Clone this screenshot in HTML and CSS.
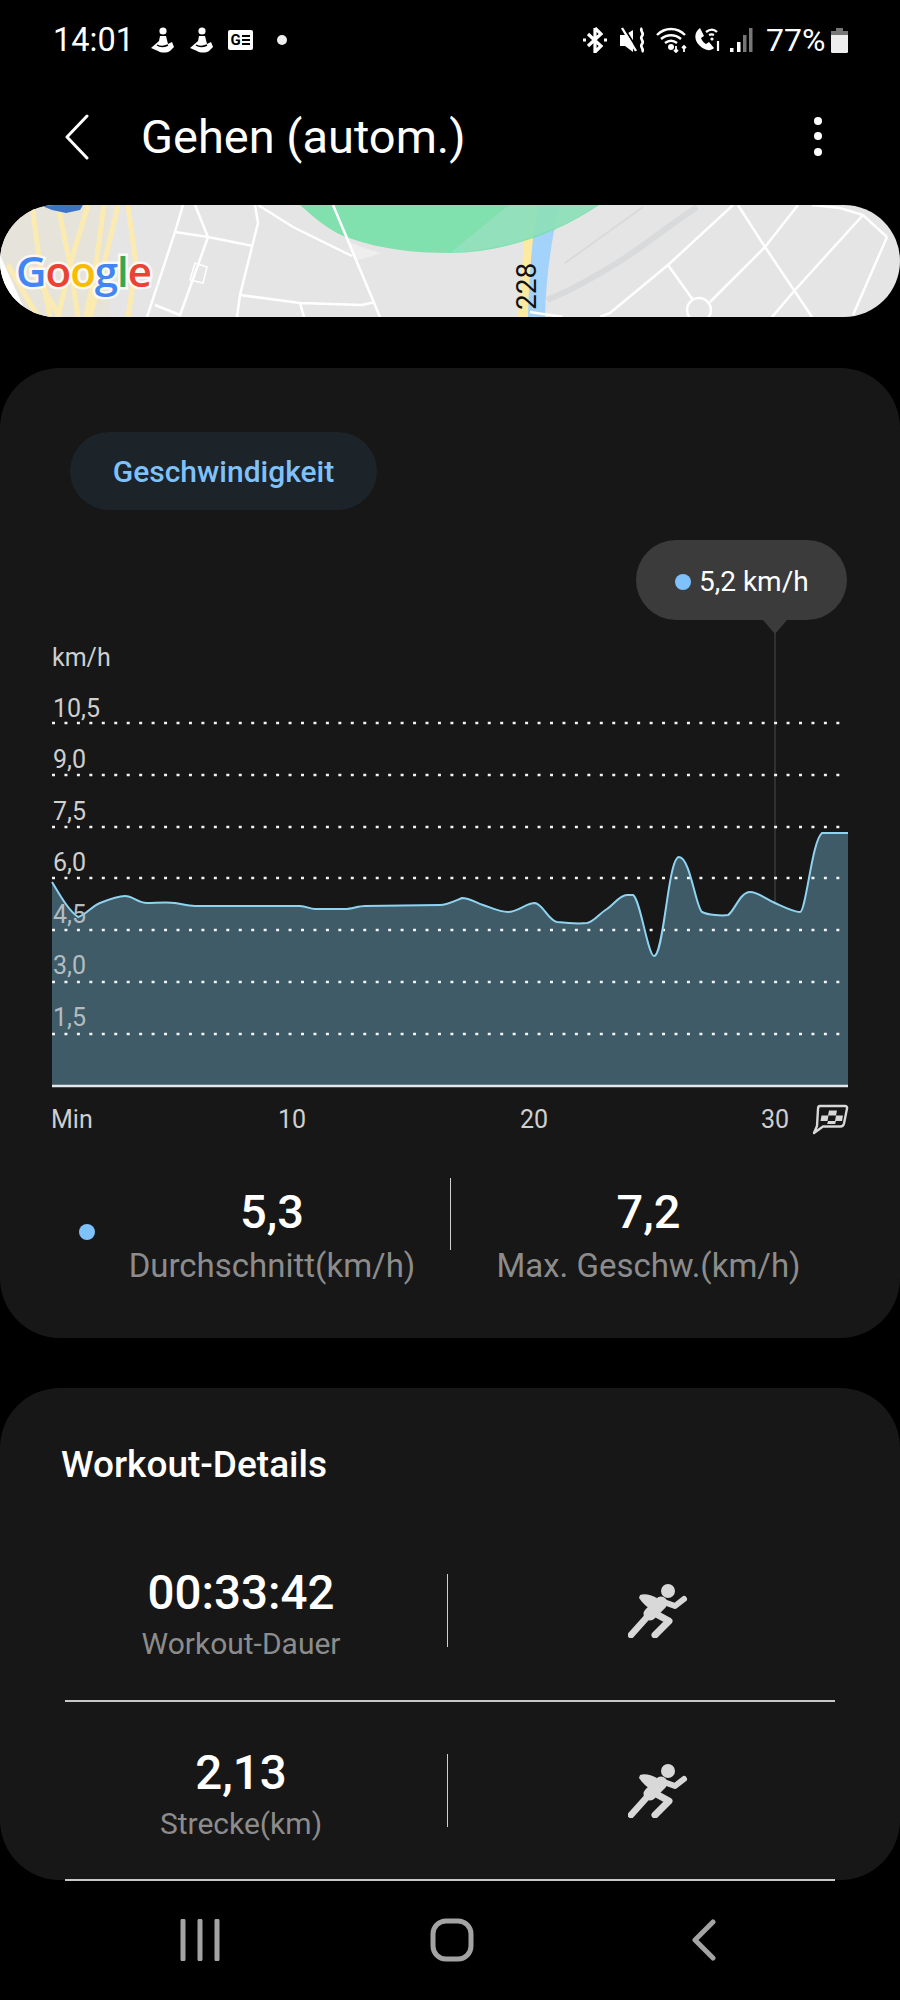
FILE: index.html
```html
<!DOCTYPE html>
<html lang="de">
<head>
  <meta charset="UTF-8" />
  <title>Gehen (autom.)</title>
  <link rel="stylesheet" href="styles.css">
</head>
<body>

  <div class="status">
    <span class="clock">14:01</span>
    <svg class="ic-person" viewBox="0 0 24 26"><circle cx="13" cy="4" r="3.6"/><path d="M10 9h6l2 8 4-2 2 5-4 4c-3 2-9 2-12 0l-7-3 8-7z"/><path d="M7 18c3 2 7 2 11 0" fill="none" stroke="#000" stroke-width="1.500"/></svg>
    <svg class="ic-person" viewBox="0 0 24 26"><circle cx="13" cy="4" r="3.6"/><path d="M10 9h6l2 8 4-2 2 5-4 4c-3 2-9 2-12 0l-7-3 8-7z"/><path d="M7 18c3 2 7 2 11 0" fill="none" stroke="#000" stroke-width="1.500"/></svg>
    <svg class="ic-news" viewBox="0 0 25 20"><rect width="25" height="20" rx="2" fill="#fff"/><text x="2.5" y="15" class="ic-news-g">G</text><path d="M14 6h8M14 10h8M14 14h8" stroke="#000" stroke-width="2"/></svg>
    <span class="status-dot"></span>
    <span class="status-gap"></span>
    <svg class="ic-bt" viewBox="0 0 24 26" fill="none" stroke="#fff" stroke-width="3.200"><path d="M12 1v24l6-6L5 7M12 1l6 6L5 19"/><path d="M0 13h3M21 13h3"/></svg>
    <svg class="ic-mute" viewBox="0 0 28 26"><path d="M1 8h5l8-5v22l-8-6H1z" fill="#fff"/><path d="M5 1l14 22" stroke="#000" stroke-width="2"/><path d="M3 1l14 23" stroke="#fff" stroke-width="2.400"/><path d="M23 1c-3 3 3 5 0 8s3 5 0 8 3 5 0 8" fill="none" stroke="#fff" stroke-width="2.600"/></svg>
    <svg class="ic-wifi" viewBox="0 0 33 26" fill="none" stroke="#fff" stroke-width="2.400"><path d="M1 8c8-8 20-8 28 0M5 12c6-5 14-5 20 0M9 16c4-3 8-3 12 0"/><circle cx="15" cy="20" r="1.800" fill="#fff"/><path d="M20 19v6M18 23l2 2 2-2M28 25v-6M26 21l2-2 2 2" stroke-width="1.800"/></svg>
    <svg class="ic-call" viewBox="0 0 28 26"><path d="M6 1C0 5 0 13 5 18s11 7 15 3l-5-6-3 2c-2-1-4-3-5-6l3-2z" fill="#fff"/><path d="M12 5c4-3 8-3 11 0M15 8c2-1 3-1 5 0" fill="none" stroke="#fff" stroke-width="2.200"/><circle cx="18" cy="12" r="1.600" fill="#fff"/><path d="M24 14v10" stroke="#fff" stroke-width="2.200"/></svg>
    <svg class="ic-signal" viewBox="0 0 24 26"><rect x="1" y="21" width="3.500" height="4" fill="#fff"/><rect x="8" y="15" width="3.500" height="10" fill="#fff"/><rect x="14" y="8" width="3.500" height="17" fill="#777"/><rect x="20" y="1" width="3.500" height="24" fill="#777"/></svg>
    <span class="percent">77%</span>
    <svg class="ic-battery" viewBox="0 0 17 25"><rect x="5" y="0" width="7" height="3" fill="#777"/><rect x="0" y="3" width="17" height="22" rx="1.5" fill="#eee"/><rect x="0" y="3" width="17" height="4" fill="#777"/></svg>
  </div>

  <div class="appbar">
    <svg class="back" viewBox="0 0 26 46" fill="none"><path d="M23 2L3 23l20 21" stroke="#fff" stroke-width="3" stroke-linecap="round" stroke-linejoin="round"/></svg>
    <h1 class="title">Gehen (autom.)</h1>
    <svg class="more" viewBox="0 0 10 42"><circle cx="5" cy="5" r="4" fill="#fff"/><circle cx="5" cy="20" r="4" fill="#fff"/><circle cx="5" cy="36" r="4" fill="#fff"/></svg>
  </div>

  <div class="map">
    <svg viewBox="0 0 900 112" width="900" height="112">
      <rect width="900" height="112" fill="#e5e5e5"/>
      <!-- left yellow roads -->
      <path d="M0 0h110v112H0z" fill="#e6e4da"/>
      <g fill="none" stroke="#fcebb0" stroke-width="5">
        <path d="M32 0l8 60 10 52M58 0L70 60l8 52M104 0L96 60l-10 52M128 0l8 60-8 52M88 0L70 60 58 112M118 0l-14 60-14 52"/>
        <path d="M8 60l30 52M60 112l-30-50"/>
      </g>
      <path d="M40 0h43l-3 5-14 3-14-3z" fill="#3d74c4"/>
      <path d="M0 50l28 62H0z" fill="#fff"/>
      <!-- railway -->
      <g fill="none" stroke="#d8dadb">
        <path d="M565 58l78-56" stroke-width="2"/>
        <path d="M547 95c30-12 50-25 70-37s50-36 80-56" stroke-width="6"/>
      </g>
      <!-- road and river under the green area -->
      <path d="M527 0h10l-9 112h-10z" fill="#fdeaa0"/>
      <path d="M538 0h22c-8 30-14 70-15 112h-17c1-40 4-80 10-112z" fill="#a3d2fb"/>
      <path d="M300 0c18 16 32 28 52 34 30 10 60 14 98 14 50 0 105-18 149-48z" fill="#72e0a6" fill-opacity=".88"/>
      <path d="M450 48c50-2 100-18 149-48h-90z" fill="#a6e0cb" fill-opacity=".5"/>
      <path d="M333 0l18 38c12 5 24 8 30 10l-12 4-14 4-22-56z" fill="#fff" fill-opacity=".35"/>
      <!-- streets -->
      <g fill="none" stroke="#fff" stroke-width="2.5">
        <path d="M183 0l-8 27-28 85M195 0l13 32-20 56-8 22-25-10M175 27l33 5 45 9M255 0l3 18-18 72-3 22M258 0l35 22 59 29M333 0l47 112M240 90l60 8 62 2 13-3M300 98l4 14"/>
        <path d="M733 0l-65 60-58 48-10 4M738 0l27 42 47 70M798 0l-33 42-55 55M668 60l25 35M863 10l-68 75-23 27M812 0l28 3 23 7 24 22M887 32l-34 78M530 107l33 5"/>
        <circle cx="699" cy="105" r="12"/>
        <path d="M195 58l12 4-4 16-13-3z" stroke-width="1.5"/>
      </g>
      <text x="0" y="0" class="map-road" transform="translate(536 105) rotate(-90)">228</text>
      <text x="16" y="82" class="map-logo"><tspan fill="#4285f4">G</tspan><tspan fill="#ea4335">o</tspan><tspan fill="#fbbc05">o</tspan><tspan fill="#4285f4">g</tspan><tspan fill="#34a853">l</tspan><tspan fill="#ea4335">e</tspan></text>
    </svg>
  </div>

  <section class="card card-speed">
    <div class="pill">Geschwindigkeit</div>

    <div class="chart">
      <svg viewBox="0 540 900 600" width="900" height="600">
        <path class="area" d="M52 882C60 895 68 910 78 917C86 915 92 906 100 903C110 899 118 896 125 896C133 896 138 903 147 903C155 903 168 902 175 903C182 904 188 906 195 906L300 906C306 906 310 909 315 909L345 909C352 909 358 906 365 906L440 905C446 905 450 903 462 898C470 898 476 903 483 905C492 908 500 912 508 912C518 912 526 903 535 903C543 904 548 920 557 922C566 923 578 924 587 923C594 922 600 913 607 909C614 904 620 895 627 895L633 895C640 898 648 956 654 956C664 956 668 857 679 857C690 857 696 908 702 912C708 915 722 916 728 915C734 912 740 892 750 892C758 892 766 899 775 903C784 907 794 912 800 912C806 912 812 840 822 833L848 833L848 1086L52 1086Z"/>
        <path class="marker" d="M775 630V903"/>
        <path class="grid" d="M52 723H842M52 775H842M52 827H842M52 878H842M52 930H842M52 982H842M52 1034H842"/>
        <path class="curve" d="M52 882C60 895 68 910 78 917C86 915 92 906 100 903C110 899 118 896 125 896C133 896 138 903 147 903C155 903 168 902 175 903C182 904 188 906 195 906L300 906C306 906 310 909 315 909L345 909C352 909 358 906 365 906L440 905C446 905 450 903 462 898C470 898 476 903 483 905C492 908 500 912 508 912C518 912 526 903 535 903C543 904 548 920 557 922C566 923 578 924 587 923C594 922 600 913 607 909C614 904 620 895 627 895L633 895C640 898 648 956 654 956C664 956 668 857 679 857C690 857 696 908 702 912C708 915 722 916 728 915C734 912 740 892 750 892C758 892 766 899 775 903C784 907 794 912 800 912C806 912 812 840 822 833L848 833"/>
        <path class="axis" d="M52 1086H848"/>

        <text x="52" y="666" class="lbl">km/h</text>
        <text x="53" y="717" class="lbl">10,5</text>
        <text x="53" y="768" class="lbl">9,0</text>
        <text x="53" y="820" class="lbl">7,5</text>
        <text x="53" y="871" class="lbl">6,0</text>
        <text x="53" y="923" class="lbl lbl-in">4,5</text>
        <text x="53" y="974" class="lbl lbl-in">3,0</text>
        <text x="53" y="1026" class="lbl lbl-in">1,5</text>

        <text x="51" y="1128" class="lbl">Min</text>
        <text x="292" y="1128" class="lbl lbl-mid">10</text>
        <text x="534" y="1128" class="lbl lbl-mid">20</text>
        <text x="775" y="1128" class="lbl lbl-mid">30</text>

        <g transform="translate(813 1104)">
          <path d="M7 2h25c1.500 0 2.500 1 2 2.500l-3 15c-.5 2-2 3-3.500 3H10L1 29l3-7 1-17C5 3 6 2 7 2z" fill="none" stroke="#d8d8d8" stroke-width="2.400" stroke-linejoin="round"/>
          <path d="M16 6.500h8l-1 5h-8zM8.500 11.500h7l-1 5.500H7.500zM23 11.500h7l-1 5.500h-7z" fill="#d8d8d8"/>
          <path d="M15 17h8l-.8 3h-8z" fill="#d8d8d8"/>
        </g>
      </svg>

      <div class="tip">
        <span class="tip-dot"></span>
        <span>5,2 km/h</span>
      </div>
    </div>

    <div class="stats">
      <span class="stats-dot"></span>
      <div class="stat">
        <div class="stat-val">5,3</div>
        <div class="stat-lbl">Durchschnitt(km/h)</div>
      </div>
      <span class="stats-div"></span>
      <div class="stat">
        <div class="stat-val">7,2</div>
        <div class="stat-lbl">Max. Geschw.(km/h)</div>
      </div>
    </div>
  </section>

  <section class="card card-details">
    <h2 class="details-title">Workout-Details</h2>

    <div class="row row-first">
      <div class="row-main">
        <div class="row-val">00:33:42</div>
        <div class="row-lbl">Workout-Dauer</div>
      </div>
      <span class="row-div"></span>
      <div class="row-icon">
        <svg class="runner" viewBox="0 0 60 54" width="60" height="54"><circle cx="40" cy="7" r="7"/><path d="M12 11c5-2 11 0 17 3l-6 11c-5-2-9-7-12-11z"/><g fill="none" stroke="#d8d8d8" stroke-linecap="round" stroke-linejoin="round"><path d="M3 51l17-19" stroke-width="6.500"/><path d="M22 30l11-11" stroke-width="13"/><path d="M30 31l11 6-14 14" stroke-width="7"/><path d="M33 17l14 5 9-7" stroke-width="6"/></g></svg>
      </div>
    </div>

    <div class="row">
      <div class="row-main">
        <div class="row-val">2,13</div>
        <div class="row-lbl">Strecke(km)</div>
      </div>
      <span class="row-div"></span>
      <div class="row-icon">
        <svg class="runner" viewBox="0 0 60 54" width="60" height="54"><circle cx="40" cy="7" r="7"/><path d="M12 11c5-2 11 0 17 3l-6 11c-5-2-9-7-12-11z"/><g fill="none" stroke="#d8d8d8" stroke-linecap="round" stroke-linejoin="round"><path d="M3 51l17-19" stroke-width="6.500"/><path d="M22 30l11-11" stroke-width="13"/><path d="M30 31l11 6-14 14" stroke-width="7"/><path d="M33 17l14 5 9-7" stroke-width="6"/></g></svg>
      </div>
    </div>
  </section>

  <div class="nav">
    <svg class="nav-recent" viewBox="0 0 40 42"><path d="M3 2v38M20 2v38M37 2v38" stroke="#a3a3a3" stroke-width="5" stroke-linecap="round"/></svg>
    <svg class="nav-home" viewBox="0 0 44 44"><rect x="3" y="3" width="38" height="38" rx="13" fill="none" stroke="#a3a3a3" stroke-width="5"/></svg>
    <svg class="nav-back" viewBox="0 0 26 42"><path d="M22 3L4 21l18 18" fill="none" stroke="#a3a3a3" stroke-width="5" stroke-linecap="round" stroke-linejoin="round"/></svg>
  </div>

</body>
</html>
```

FILE: styles.css
```css
body {
  margin: 0;
  width: 900px;
  height: 2000px;
  overflow: hidden;
  background-color: #000;
  color: #fff;
  font-family: Roboto, 'Noto Sans', sans-serif;
}

/* status bar */
.status {
  height: 80px;
  padding: 0 52px 0 53px;
  display: flex;
  align-items: center;
}
.clock {
  font-size: 32.5px;
  width: 97px;
}
.percent {
  font-size: 32px;
  margin-left: 13px;
  width: 65px;
}
.ic-person {
  width: 24px;
  height: 26px;
  fill: #fff;
  margin-right: 15px;
}
.ic-news {
  width: 25px;
  height: 20px;
}
.ic-news-g {
  font-size: 15px;
  font-weight: 700;
  fill: #000;
}
.status-dot {
  width: 10px;
  height: 10px;
  border-radius: 50%;
  background: #eee;
  margin-left: 24px;
}
.status-gap {
  flex: 1;
}
.ic-bt { width: 24px; height: 26px; margin-right: 12px; }
.ic-mute { width: 28px; height: 26px; margin-right: 9px; }
.ic-wifi { width: 33px; height: 26px; margin-right: 5px; }
.ic-call { width: 28px; height: 26px; margin-right: 7px; }
.ic-signal { width: 24px; height: 26px; }
.ic-battery { width: 17px; height: 25px; }

/* app bar */
.appbar {
  height: 113px;
  margin-bottom: 12px;
  padding: 0 77px 0 64px;
  display: flex;
  align-items: center;
}
.back {
  width: 26px;
  height: 46px;
}
.title {
  margin: 0 0 0 51px;
  flex: 1;
  font-size: 47px;
  font-weight: 400;
}
.more {
  width: 10px;
  height: 42px;
}

/* map */
.map {
  height: 112px;
  border-radius: 56px;
  overflow: hidden;
}
.map svg {
  display: block;
}
.map-road {
  font-size: 28px;
  fill: #111;
}
.map-logo {
  font-family: 'Open Sans', sans-serif;
  font-size: 42px;
  font-weight: 600;
  paint-order: stroke;
  stroke: #fff;
  stroke-opacity: .75;
  stroke-width: 5px;
  letter-spacing: -1px;
}

/* cards */
.card {
  background-color: #171717;
  border-radius: 60px;
}
.card-speed {
  margin-top: 51px;
  height: 970px;
  padding-top: 64px;
  box-sizing: border-box;
}
.card-details {
  margin-top: 50px;
  height: 492px;
  padding: 1px 65px 0;
  box-sizing: border-box;
}

.pill {
  margin-left: 70px;
  width: 307px;
  height: 78px;
  border-radius: 39px;
  background-color: #1c2329;
  color: #7fc1fb;
  font-size: 30px;
  font-weight: 500;
  display: flex;
  align-items: center;
  justify-content: center;
}

/* chart */
.chart {
  position: relative;
  margin-top: 30px;
  height: 600px;
}
.chart svg {
  display: block;
}
.area { fill: #3e5b67; }
.marker { stroke: #303030; stroke-width: 2; fill: none; }
.grid {
  fill: none;
  stroke: #f4f4f4;
  stroke-width: 2.500;
  stroke-dasharray: 3 9.45;
}
.curve { fill: none; stroke: #8fd3f0; stroke-width: 2; }
.axis { stroke: #e4e8ea; stroke-width: 2.5; }
.lbl {
  font-size: 25px;
  fill: #cfcfcf;
}
.lbl-in { fill: #b4bcc0; }
.lbl-mid { text-anchor: middle; }

.tip {
  position: absolute;
  left: 636px;
  top: 0;
  width: 211px;
  height: 80px;
  border-radius: 40px;
  background-color: #3b3b3b;
  font-size: 28px;
  display: flex;
  align-items: center;
  padding: 3px 0 0 39px;
  gap: 8px;
  box-sizing: border-box;
}
.tip::after {
  content: "";
  position: absolute;
  left: 127px;
  top: 80px;
  border-left: 12px solid transparent;
  border-right: 12px solid transparent;
  border-top: 14px solid #3b3b3b;
}
.tip-dot {
  width: 16px;
  height: 16px;
  border-radius: 50%;
  background-color: #7fc1fb;
}

/* summary under the chart */
.stats {
  display: grid;
  grid-template-columns: 94px 356px 1px 395px;
  margin-top: 38px;
}
.stats-dot {
  width: 16px;
  height: 16px;
  border-radius: 50%;
  background-color: #7fc1fb;
  margin: 46px 0 0 79px;
}
.stats-div {
  height: 72px;
  background-color: #cfcfcf;
}
.stat {
  text-align: center;
  padding-top: 9px;
}
.stat-val {
  font-size: 47px;
  font-weight: 500;
  line-height: 50px;
}
.stat-lbl {
  font-size: 33px;
  line-height: 40px;
  margin-top: 9px;
  color: #8c8c8c;
}

/* workout details */
.details-title {
  margin: 56px 0 0 -4px;
  font-size: 37px;
  font-weight: 500;
  line-height: 40px;
}
.row {
  display: grid;
  grid-template-columns: 382px 1px 387px;
  align-items: start;
  height: 179px;
  padding-top: 52px;
  box-sizing: border-box;
  border-bottom: 2px solid #c8c8c8;
}
.row-first {
  height: 217px;
  padding-top: 89px;
}
.row-main {
  text-align: center;
  margin-left: -30px;
}
.row-val {
  font-size: 47.5px;
  font-weight: 500;
  line-height: 50px;
  margin-top: -6px;
}
.row-lbl {
  font-size: 30px;
  line-height: 36px;
  margin-top: 8px;
  color: #8c8c8c;
}
.row-div {
  height: 73px;
  background-color: #cfcfcf;
}
.row-icon {
  padding: 10px 0 0 180px;
}
.runner {
  fill: #d8d8d8;
  display: block;
}

/* nav bar */
.nav {
  height: 121px;
  margin-top: -1px;
  display: flex;
  align-items: center;
  padding-left: 180px;
}
.nav-recent { width: 40px; height: 42px; }
.nav-home { width: 44px; height: 44px; margin-left: 210px; }
.nav-back { width: 26px; height: 42px; margin-left: 217px; }
```
